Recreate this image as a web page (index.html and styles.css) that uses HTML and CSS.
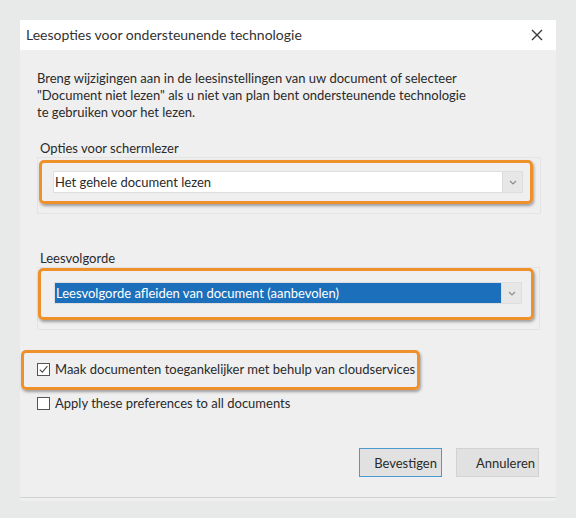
FILE: index.html
```html
<!DOCTYPE html>
<html lang="nl">
<head>
<meta charset="utf-8">
<title>Leesopties voor ondersteunende technologie</title>
<link rel="stylesheet" href="styles.css">
</head>
<body>
<div class="screen">
  <div class="dialog">
    <div class="titlebar">
      <span class="title">Leesopties voor ondersteunende technologie</span>
      <svg class="close" width="12" height="12" viewBox="0 0 12 12"><path d="M1 1 L11 11 M11 1 L1 11" stroke="#3a3a3a" stroke-width="1.4" fill="none"/></svg>
    </div>
    <div class="content">
      <p class="intro">Breng wijzigingen aan in de leesinstellingen van uw document of selecteer<br>"Document niet lezen" als u niet van plan bent ondersteunende technologie<br>te gebruiken voor het lezen.</p>

      <div class="group-label">Opties voor schermlezer</div>
      <div class="groupbox g1">
        <div class="highlight h1">
          <div class="select">
            <span class="value">Het gehele document lezen</span>
            <span class="arrow"><svg width="8" height="5" viewBox="0 0 8 5"><path d="M1 1 L4 4 L7 1" stroke="#8a8a8a" stroke-width="1.1" fill="none"/></svg></span>
          </div>
        </div>
      </div>

      <div class="group-label second">Leesvolgorde</div>
      <div class="groupbox g2">
        <div class="highlight h2">
          <div class="select selected">
            <span class="value">Leesvolgorde afleiden van document (aanbevolen)</span>
            <span class="arrow"><svg width="8" height="5" viewBox="0 0 8 5"><path d="M1 1 L4 4 L7 1" stroke="#8a8a8a" stroke-width="1.1" fill="none"/></svg></span>
          </div>
        </div>
      </div>

      <div class="highlight h3">
        <label class="check-row">
          <span class="box"><svg width="11" height="11" viewBox="0 0 11 11"><path d="M1.8 5.6 L4.3 8.2 L9.4 2.2" stroke="#4a4a4a" stroke-width="1.1" fill="none"/></svg></span>
          <span>Maak documenten toegankelijker met behulp van cloudservices</span>
        </label>
      </div>
      <label class="check-row apply">
        <span class="box"></span>
        <span>Apply these preferences to all documents</span>
      </label>

      <div class="buttons">
        <button class="btn primary">Bevestigen</button>
        <button class="btn">Annuleren</button>
      </div>
    </div>
    <div class="footer-line"></div>
  </div>
</div>
</body>
</html>
```

FILE: styles.css
```css
html, body {
  margin: 0;
  padding: 0;
}
body {
  background: #e7eae9;
  font-family: Lato, "Liberation Sans", sans-serif;
  font-size: 13px;
  color: #2a2a2a;
}
.screen {
  width: 576px;
  height: 518px;
  box-sizing: border-box;
  padding: 20px 20px 0 20px;
}
.dialog {
  width: 536px;
  background: #efefef;
  padding-bottom: 3px;
}
.titlebar {
  height: 30px;
  background: #ffffff;
  display: flex;
  align-items: center;
  justify-content: space-between;
  padding: 0 13px 0 6px;
  font-size: 14px;
  color: #333;
}
.title {
  line-height: 17px;
  margin-top: -1px;
}
.close {
  display: block;
}
.content {
  padding: 20px 16px 0 17px;
}
.intro {
  margin: 0;
  line-height: 17px;
}
.group-label {
  margin-top: 19px;
  line-height: 17px;
  padding-left: 3px;
}
.group-label.second {
  margin-top: 36px;
}
.groupbox {
  border: 1px solid #e4e4e4;
  width: 501px;
}
.g1 {
  padding: 2px 0 9px 1px;
}
.g2 {
  padding: 0 0 9px 0;
}
.highlight {
  border: 3px solid #ee902c;
  border-radius: 5px;
  box-shadow: 1px 2px 3px rgba(0, 0, 0, 0.35);
}
.h1 {
  width: 470px;
  padding: 8px 7px 8px 11px;
}
.h2 {
  width: 468px;
  padding: 11px 9px 13px 13px;
}
.select {
  height: 22px;
  display: flex;
  background: #ffffff;
  border: 1px solid #dedede;
  box-sizing: border-box;
}
.select .value {
  flex: 1;
  line-height: 20px;
  padding-left: 1px;
}
.select.selected .value {
  background: #1c70bb;
  color: #ffffff;
  margin: 0;
  padding-left: 1px;
}
.arrow {
  width: 19px;
  background: #e7e7e7;
  border-left: 1px solid #dcdcdc;
  display: flex;
  align-items: center;
  justify-content: center;
}
.h3 {
  margin-top: 20px;
  margin-left: -16px;
  width: 380px;
  padding: 8px 0 9px 13px;
}
.check-row {
  display: flex;
  align-items: center;
  gap: 5px;
  line-height: 17px;
}
.box {
  width: 13px;
  height: 13px;
  box-sizing: border-box;
  border: 1px solid #555;
  background: #ffffff;
  display: flex;
  align-items: center;
  justify-content: center;
}
.apply {
  margin-top: 5px;
}
.buttons {
  margin-top: 36px;
  display: flex;
  justify-content: flex-end;
  gap: 14px;
  padding-right: 1px;
}
.btn {
  width: 83px;
  height: 29px;
  background: #e1e1e1;
  border: 1px solid #d2d2d2;
  font-family: Lato, "Liberation Sans", sans-serif;
  font-size: 13px;
  color: #2a2a2a;
  text-align: right;
  padding: 0 3px 0 0;
}
.btn.primary {
  border: 1px solid #4b99cf;
  padding-right: 4px;
}
.footer-line {
  margin-top: 20px;
  border-top: 1px solid #d3d3d3;
}
```
